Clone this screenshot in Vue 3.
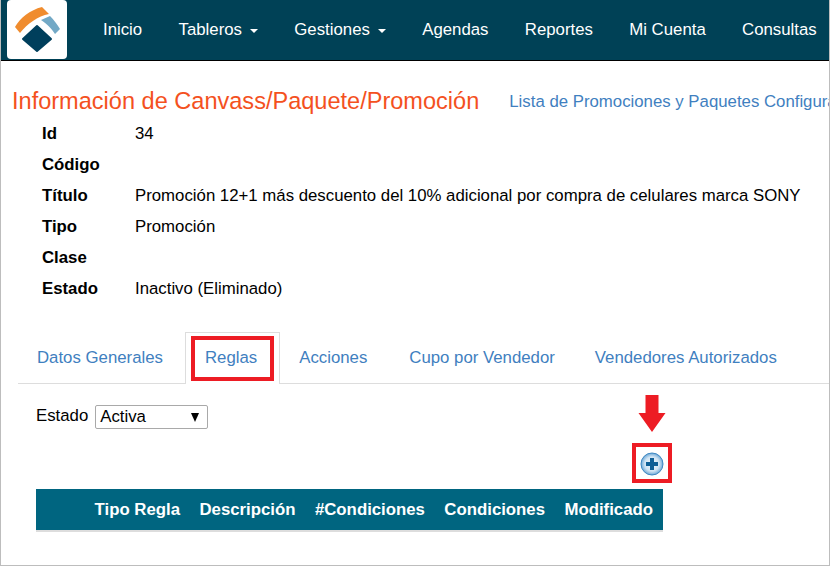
<script setup>
const menu = [
  { label: 'Inicio' },
  { label: 'Tableros', caret: true },
  { label: 'Gestiones', caret: true },
  { label: 'Agendas' },
  { label: 'Reportes' },
  { label: 'Mi Cuenta' },
  { label: 'Consultas' }
]
const info = [
  ['Id', '34'],
  ['Código', ''],
  ['Título', 'Promoción 12+1 más descuento del 10% adicional por compra de celulares marca SONY'],
  ['Tipo', 'Promoción'],
  ['Clase', ''],
  ['Estado', 'Inactivo (Eliminado)']
]
const tabs = ['Datos Generales', 'Reglas', 'Acciones', 'Cupo por Vendedor', 'Vendedores Autorizados']
const cols = ['Tipo Regla', 'Descripción', '#Condiciones', 'Condiciones', 'Modificado']
</script>

<template>
  <div class="shot">
    <nav class="nav">
      <div class="logo">
        <svg width="60" height="59" viewBox="0 0 60 59">
          <path d="M8 27 C13 18 23 10 35 7 L42 14 C31 16 20 24 13 33 Z" fill="#f08c2e" />
          <path d="M34 20 L43 16 C47 20 50 24 53 29 L48 34 C45 29 41 25 34 20 Z" fill="#73a9c6" />
          <path d="M30 26 L44 39 L30 51 L16 39 Z" fill="#003f5c" stroke="#003f5c" stroke-width="2" stroke-linejoin="round" />
        </svg>
      </div>
      <ul class="menu">
        <li v-for="m in menu" :key="m.label">
          {{ m.label }}<span v-if="m.caret" class="caret"></span>
        </li>
      </ul>
    </nav>

    <div class="head">
      <h1>Información de Canvass/Paquete/Promoción</h1>
      <a class="list-link">Lista de Promociones y Paquetes Configurados</a>
    </div>

    <dl class="info">
      <div v-for="row in info" :key="row[0]" class="row">
        <dt>{{ row[0] }}</dt>
        <dd>{{ row[1] }}</dd>
      </div>
    </dl>

    <ul class="tabs">
      <li v-for="t in tabs" :key="t" :class="{ active: t === 'Reglas' }">
        <a>{{ t }}</a>
        <span v-if="t === 'Reglas'" class="mark"></span>
      </li>
    </ul>

    <div class="filter">
      <label>Estado</label>
      <div class="select">Activa<span class="tri"></span></div>
    </div>

    <div class="add-row">
      <div class="add">
        <svg class="arrow" width="28" height="38" viewBox="0 0 28 38">
          <path d="M7.5 0 H20.5 V18 H27.5 L14 37 L0.5 18 H7.5 Z" fill="#ed1c24" />
        </svg>
        <div class="mark-add">
          <svg width="24" height="24" viewBox="0 0 24 24">
            <defs>
              <radialGradient id="g" cx="50%" cy="50%" r="55%">
                <stop offset="0%" stop-color="#f4f9fd" />
                <stop offset="60%" stop-color="#cfe3f3" />
                <stop offset="100%" stop-color="#4f97cf" />
              </radialGradient>
            </defs>
            <circle cx="12" cy="12" r="11" fill="url(#g)" stroke="#3f88c2" stroke-width="1" />
            <path d="M10 6 H14 V10 H18 V14 H14 V18 H10 V14 H6 V10 H10 Z" fill="#0f5f96" />
          </svg>
        </div>
      </div>
    </div>

    <div class="thead">
      <span v-for="c in cols" :key="c">{{ c }}</span>
    </div>
  </div>
</template>

<style>
html, body { margin: 0; background: #fff; }
</style>

<style scoped>
.shot {
  box-sizing: border-box;
  width: 830px;
  height: 566px;
  border-left: 1px solid #bdbdbd;
  border-right: 1px solid #bdbdbd;
  border-bottom: 1px solid #bdbdbd;
  overflow: hidden;
  font-family: "Liberation Sans", Arial, sans-serif;
  font-size: 16.8px;
  color: #000;
  background: #fff;
}
.nav {
  display: flex;
  height: 60px;
  background: #004156;
  border-bottom: 1px solid #000;
}
.logo {
  flex: none;
  width: 60px;
  height: 59px;
  margin-left: 6px;
  background: #fff;
  border-radius: 4px;
}
.logo svg { display: block; }
.menu {
  display: flex;
  flex: none;
  gap: 36.35px;
  margin: 0 0 0 36px;
  padding: 0;
  list-style: none;
  color: #fff;
  line-height: 59px;
  white-space: nowrap;
}
.caret {
  display: inline-block;
  margin-left: 8px;
  vertical-align: middle;
  border-top: 4px solid #fff;
  border-left: 4.5px solid transparent;
  border-right: 4.5px solid transparent;
}
.head {
  display: flex;
  align-items: center;
  gap: 30px;
  padding: 27px 0 0 11px;
  white-space: nowrap;
}
h1 {
  margin: 0;
  font-size: 23.55px;
  font-weight: 400;
  line-height: 26px;
  color: #f4511e;
}
.list-link { padding-top: 2px; color: #3f80c0; }
.info { margin: 4px 0 0 41px; }
.row {
  display: flex;
  height: 31px;
  line-height: 31px;
}
dt { width: 93px; font-weight: 700; }
dd { margin: 0; white-space: nowrap; }
.tabs {
  display: flex;
  margin: 28px 0 0 17px;
  padding: 0;
  list-style: none;
  border-bottom: 1px solid #ddd;
  height: 51px;
  white-space: nowrap;
}
.tabs li {
  position: relative;
  box-sizing: border-box;
  height: 52px;
  padding: 14px 20px 0;
  line-height: 22px;
  color: #3f80c0;
  border: 1px solid transparent;
  border-bottom: 0;
}
.tabs li:first-child { margin-left: -2px; }
.tabs li.active {
  margin: 0 -2px 0 1px;
  padding: 14px 22px 0 19px;
  background: #fff;
  border-color: #ddd;
}
.tabs li:nth-child(4) { margin-right: -2px; }
.mark {
  position: absolute;
  left: 5px;
  top: 3px;
  width: 83px;
  height: 45px;
  box-sizing: border-box;
  border: 4px solid #ed1c24;
}
.filter {
  display: flex;
  align-items: center;
  gap: 7px;
  margin: 21px 0 0 35px;
  height: 24px;
}
.filter label { padding-bottom: 2px; }
.select {
  box-sizing: border-box;
  display: flex;
  justify-content: space-between;
  align-items: center;
  width: 113px;
  height: 24px;
  padding: 0 8px 0 4px;
  border: 1px solid #a9a9a9;
  border-radius: 2px;
}
.tri {
  border-top: 9px solid #000;
  border-left: 4.5px solid transparent;
  border-right: 4.5px solid transparent;
}
.add-row {
  display: flex;
  justify-content: flex-end;
  width: 672px;
  height: 60px;
}
.add { position: relative; width: 41px; }
.arrow { position: absolute; left: 6px; top: -34px; }
.mark-add {
  position: absolute;
  left: 0;
  top: 14px;
  box-sizing: border-box;
  width: 40px;
  height: 40px;
  border: 4px solid #ed1c24;
  display: flex;
  align-items: center;
  justify-content: center;
}
.mark-add svg { margin: 2px 1px 0 0; }
.thead {
  display: flex;
  justify-content: flex-end;
  gap: 19.4px;
  box-sizing: border-box;
  width: 627px;
  height: 43px;
  margin-left: 35px;
  padding: 0 10px 0 0;
  background: #006580;
  border-bottom: 2px solid #ddd;
  color: #fff;
  font-weight: 700;
  line-height: 41px;
  white-space: nowrap;
}
</style>
